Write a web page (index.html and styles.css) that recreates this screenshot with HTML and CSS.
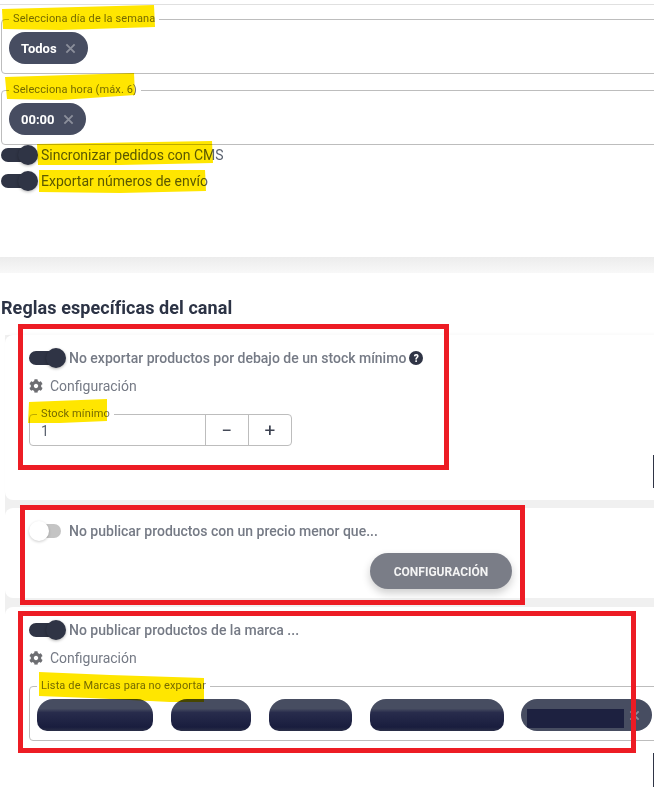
FILE: index.html
```html
<!DOCTYPE html>
<html lang="es">

<head>
    <meta charset="UTF-8">
    <meta name="viewport" content="width=device-width, initial-scale=1.0">
    <title>Reglas del canal</title>
    <link rel="stylesheet" href="styles.css">
</head>

<body>
    <div class="page">
        <section class="general-panel">
            <div class="field">
                <span class="field-label">Selecciona día de la semana</span>
                <span class="chip">Todos
                    <svg class="chip-x" viewBox="0 0 12 12"><path d="M1.5 1.5l9 9M10.5 1.5l-9 9" /></svg>
                </span>
            </div>
            <div class="field">
                <span class="field-label">Selecciona hora (máx. 6)</span>
                <span class="chip">00:00
                    <svg class="chip-x" viewBox="0 0 12 12"><path d="M1.5 1.5l9 9M10.5 1.5l-9 9" /></svg>
                </span>
            </div>
            <div class="toggle-row plain">
                <span class="toggle on"></span>
                <span>Sincronizar pedidos con CMS</span>
            </div>
            <div class="toggle-row plain second">
                <span class="toggle on"></span>
                <span>Exportar números de envío</span>
            </div>
        </section>

        <div class="panel-gap"></div>

        <h2 class="section-title">Reglas específicas del canal</h2>

        <div class="rule-list">
            <section class="rule-card stock-card">
                <div class="toggle-row">
                    <span class="toggle on"></span>
                    <span>No exportar productos por debajo de un stock mínimo</span>
                    <span class="help">?</span>
                </div>
                <div class="config-row">
                    <svg class="gear" viewBox="0 0 512 512"><path d="M487.4 315.7l-42.6-24.6c4.3-23.2 4.3-47 0-70.2l42.6-24.6c4.9-2.8 7.1-8.6 5.5-14-11.1-35.6-30-67.8-54.7-94.6-3.8-4.1-10-5.1-14.8-2.3L380.8 110c-17.9-15.4-38.5-27.3-60.8-35.1V25.8c0-5.6-3.9-10.5-9.4-11.7-36.7-8.2-74.3-7.8-109.2 0-5.5 1.2-9.4 6.1-9.4 11.7V75c-22.2 7.9-42.8 19.8-60.8 35.1L88.7 85.5c-4.9-2.8-11-1.9-14.8 2.3-24.7 26.7-43.6 58.9-54.7 94.6-1.7 5.4.6 11.2 5.5 14L67.3 221c-4.3 23.2-4.3 47 0 70.2l-42.6 24.6c-4.9 2.8-7.1 8.6-5.5 14 11.1 35.6 30 67.8 54.7 94.6 3.8 4.1 10 5.1 14.8 2.3l42.6-24.6c17.9 15.4 38.5 27.3 60.8 35.1v49.2c0 5.6 3.9 10.5 9.4 11.7 36.7 8.2 74.3 7.8 109.2 0 5.5-1.2 9.4-6.1 9.4-11.7v-49.2c22.2-7.9 42.8-19.8 60.8-35.1l42.6 24.6c4.9 2.8 11 1.9 14.8-2.3 24.7-26.7 43.6-58.9 54.7-94.6 1.5-5.5-.7-11.3-5.6-14.1zM256 336c-44.1 0-80-35.9-80-80s35.9-80 80-80 80 35.9 80 80-35.9 80-80 80z" /></svg>
                    <span>Configuración</span>
                </div>
                <div class="stepper">
                    <span class="field-label">Stock mínimo</span>
                    <span class="stepper-value">1</span>
                    <span class="stepper-btn">&minus;</span>
                    <span class="stepper-btn">+</span>
                </div>
            </section>

            <section class="rule-card price-card">
                <div class="toggle-row">
                    <span class="toggle off"></span>
                    <span>No publicar productos con un precio menor que...</span>
                </div>
                <button class="config-btn">Configuración</button>
            </section>

            <section class="rule-card brand-card">
                <div class="toggle-row">
                    <span class="toggle on"></span>
                    <span>No publicar productos de la marca ...</span>
                </div>
                <div class="config-row">
                    <svg class="gear" viewBox="0 0 512 512"><path d="M487.4 315.7l-42.6-24.6c4.3-23.2 4.3-47 0-70.2l42.6-24.6c4.9-2.8 7.1-8.6 5.5-14-11.1-35.6-30-67.8-54.7-94.6-3.8-4.1-10-5.1-14.8-2.3L380.8 110c-17.9-15.4-38.5-27.3-60.8-35.1V25.8c0-5.6-3.9-10.5-9.4-11.7-36.7-8.2-74.3-7.8-109.2 0-5.5 1.2-9.4 6.1-9.4 11.7V75c-22.2 7.9-42.8 19.8-60.8 35.1L88.7 85.5c-4.9-2.8-11-1.9-14.8 2.3-24.7 26.7-43.6 58.9-54.7 94.6-1.7 5.4.6 11.2 5.5 14L67.3 221c-4.3 23.2-4.3 47 0 70.2l-42.6 24.6c-4.9 2.8-7.1 8.6-5.5 14 11.1 35.6 30 67.8 54.7 94.6 3.8 4.1 10 5.1 14.8 2.3l42.6-24.6c17.9 15.4 38.5 27.3 60.8 35.1v49.2c0 5.6 3.9 10.5 9.4 11.7 36.7 8.2 74.3 7.8 109.2 0 5.5-1.2 9.4-6.1 9.4-11.7v-49.2c22.2-7.9 42.8-19.8 60.8-35.1l42.6 24.6c4.9 2.8 11 1.9 14.8-2.3 24.7-26.7 43.6-58.9 54.7-94.6 1.5-5.5-.7-11.3-5.6-14.1zM256 336c-44.1 0-80-35.9-80-80s35.9-80 80-80 80 35.9 80 80-35.9 80-80 80z" /></svg>
                    <span>Configuración</span>
                </div>
                <div class="field brand-field">
                    <span class="field-label">Lista de Marcas para no exportar</span>
                    <div class="brand-chips">
                        <span class="blur-chip w116"></span>
                        <span class="blur-chip w80"></span>
                        <span class="blur-chip w83"></span>
                        <span class="blur-chip w134"></span>
                        <span class="blur-chip last">
                            <svg class="chip-x" viewBox="0 0 12 12"><path d="M1.5 1.5l9 9M10.5 1.5l-9 9" /></svg>
                        </span>
                    </div>
                </div>
            </section>
        </div>

        <span class="edge-tab tab-one"></span>
        <span class="edge-tab tab-two"></span>

        <!-- marcas hechas sobre la captura -->
        <svg class="marks" viewBox="0 0 654 796">
            <g class="marker">
                <path d="M2 9L154 5L155 27L60 30L3 29z" />
                <path d="M5 77L134 73L135 95L60 100L7 99z" />
                <path d="M37 144L212 141L213 163L120 165L38 165z" />
                <path d="M39 170L205 170L206 191L120 193L39 192z" />
                <path d="M29 402L107 399L107 421L60 423L28 423z" />
                <path d="M39 672L110 675L204 678L204 702L170 702L90 698L39 696z" />
            </g>
            <g class="red-box">
                <rect x="20.5" y="326.5" width="426" height="141" />
                <rect x="22.5" y="507.5" width="500" height="95" />
                <rect x="20.5" y="613.5" width="613" height="137" />
            </g>
        </svg>
    </div>
</body>

</html>
```

FILE: styles.css
```css
html,
body {
    margin: 0;
    background: #fff;
}

.page {
    position: relative;
    width: 654px;
    height: 796px;
    overflow: hidden;
    font-family: Roboto, Arial, sans-serif;
    font-size: 14px;
    color: #5c6370;
}

/* Panel de arriba */
.general-panel {
    box-sizing: border-box;
    height: 253px;
    margin-top: 4px;
    padding-top: 14px;
    border-top: 1px solid #e0e0e0;
}

.panel-gap {
    height: 16px;
    background: linear-gradient(#ececec, #f8f8f8);
}

.field {
    position: relative;
    box-sizing: border-box;
    height: 55px;
    margin: 0 -10px 16px 1px;
    padding: 12px 7px 0;
    border: 1px solid #bdbdbd;
    border-radius: 4px;
}

.field-label {
    position: absolute;
    top: -8px;
    left: 7px;
    padding: 0 4px;
    background: #fff;
    font-size: 11px;
    line-height: 14px;
    letter-spacing: 0.12px;
    color: #757575;
    white-space: nowrap;
}

.chip {
    display: inline-flex;
    align-items: center;
    gap: 8px;
    height: 32px;
    padding: 0 12px;
    border-radius: 16px;
    background: #474d61;
    color: #fff;
    font-size: 13px;
    font-weight: 700;
}

.chip-x {
    width: 11px;
    height: 11px;
    fill: none;
    stroke: #8b8f9b;
    stroke-width: 2;
}

/* Interruptores */
.toggle-row {
    display: flex;
    align-items: center;
    height: 20px;
    font-weight: 500;
    color: #757a85;
    white-space: nowrap;
}

.toggle-row.plain {
    margin: -16px 0 0 1px;
    font-weight: 400;
    color: #5c6370;
}

.toggle-row.second {
    margin-top: 6px;
}

.toggle {
    position: relative;
    flex: none;
    width: 37px;
    height: 20px;
    margin-right: 3px;
}

.toggle::before {
    content: "";
    position: absolute;
    top: 3px;
    left: 0;
    width: 34px;
    height: 14px;
    border-radius: 7px;
    background: #2f3445;
}

.toggle::after {
    content: "";
    position: absolute;
    top: 0;
    left: 17px;
    width: 20px;
    height: 20px;
    border-radius: 50%;
    background: #2f3445;
    box-shadow: 0 1px 3px rgba(0, 0, 0, 0.3);
}

.toggle.off::before {
    left: 1px;
    width: 31px;
    background: #c4c4c4;
}

.toggle.off::after {
    left: 0;
    background: #fff;
    box-shadow: 0 1px 3px rgba(0, 0, 0, 0.2);
}

.help {
    display: inline-flex;
    align-items: center;
    justify-content: center;
    width: 14px;
    height: 14px;
    margin-left: 3px;
    border-radius: 50%;
    background: #2f3445;
    color: #fff;
    font-size: 10px;
    font-weight: 900;
}

.section-title {
    box-sizing: border-box;
    height: 62px;
    margin: 0;
    padding: 24px 0 0 1px;
    font-size: 18px;
    line-height: 21px;
    font-weight: 700;
    letter-spacing: 0.07px;
    color: #2c3345;
}

/* Tarjetas */
.rule-list {
    display: flex;
    flex-direction: column;
    gap: 8px;
    margin-left: 5px;
    background: #f0f0f0;
}

.rule-card {
    box-sizing: border-box;
    margin-right: -10px;
    padding: 13px 0 0 24px;
    border-radius: 8px;
    background: #fff;
}

.stock-card {
    height: 165px;
    box-shadow: 0 -2px 3px rgba(0, 0, 0, 0.02);
}

.price-card {
    height: 90px;
}

.brand-card {
    height: 200px;
    margin-top: 1px;
}

.config-row {
    display: flex;
    align-items: center;
    gap: 7px;
    height: 20px;
    margin-top: 8px;
    color: #757a85;
}

.gear {
    width: 14px;
    height: 14px;
    fill: #6d6e72;
}

.stepper {
    position: relative;
    display: flex;
    box-sizing: border-box;
    width: 263px;
    height: 32px;
    margin-top: 18px;
    border: 1px solid #bdbdbd;
    border-radius: 4px;
    color: #5c6370;
}

.stepper-value {
    flex: 1;
    padding: 8px 0 0 11px;
    font-size: 14px;
}

.stepper-btn {
    display: flex;
    align-items: center;
    justify-content: center;
    box-sizing: border-box;
    width: 43px;
    border-left: 1px solid #bdbdbd;
    font-size: 19px;
    font-weight: 400;
    color: #3c4150;
}

.config-btn {
    display: block;
    width: 142px;
    height: 36px;
    margin: 12px 0 0 341px;
    padding: 2px 0 0;
    border: none;
    border-radius: 18px;
    background: #7a7d87;
    box-shadow: 0 4px 8px rgba(0, 0, 0, 0.2);
    color: #f4f4f4;
    font-family: Roboto, Arial, sans-serif;
    font-size: 12px;
    font-weight: 700;
    text-transform: uppercase;
}

.brand-field {
    margin: 18px -30px 0 0;
}

.brand-chips {
    display: flex;
    gap: 18px;
}

/* Marcas tapadas en la captura */
.blur-chip {
    flex: none;
    height: 32px;
    border-radius: 16px 16px 10px 10px;
    background: linear-gradient(#474d61 0, #474d61 30%, #282c4c 42%, #191d3e 88%, #2b2f48 100%);
    filter: blur(0.6px);
}

.w116 { width: 116px; }
.w80 { width: 80px; }
.w83 { width: 83px; }
.w134 { width: 134px; }

.blur-chip.last {
    display: flex;
    align-items: center;
    justify-content: flex-end;
    box-sizing: border-box;
    width: 131px;
    margin-left: -1px;
    padding-right: 12px;
    border-radius: 16px;
    background: linear-gradient(#1d2140, #1d2140) 6px 10px / 97px 19px no-repeat, #474d61;
    filter: none;
}

.edge-tab {
    position: absolute;
    right: 0;
    width: 1px;
    background: #2f3445;
}

.tab-one {
    top: 455px;
    height: 33px;
}

.tab-two {
    top: 753px;
    height: 34px;
}

/* Anotaciones de encima */
.marks {
    position: absolute;
    top: 0;
    left: 0;
    width: 654px;
    height: 796px;
    pointer-events: none;
}

.marker {
    fill: #ffe600;
    mix-blend-mode: multiply;
}

.red-box {
    fill: none;
    stroke: #ed1c24;
    stroke-width: 5;
}
```
